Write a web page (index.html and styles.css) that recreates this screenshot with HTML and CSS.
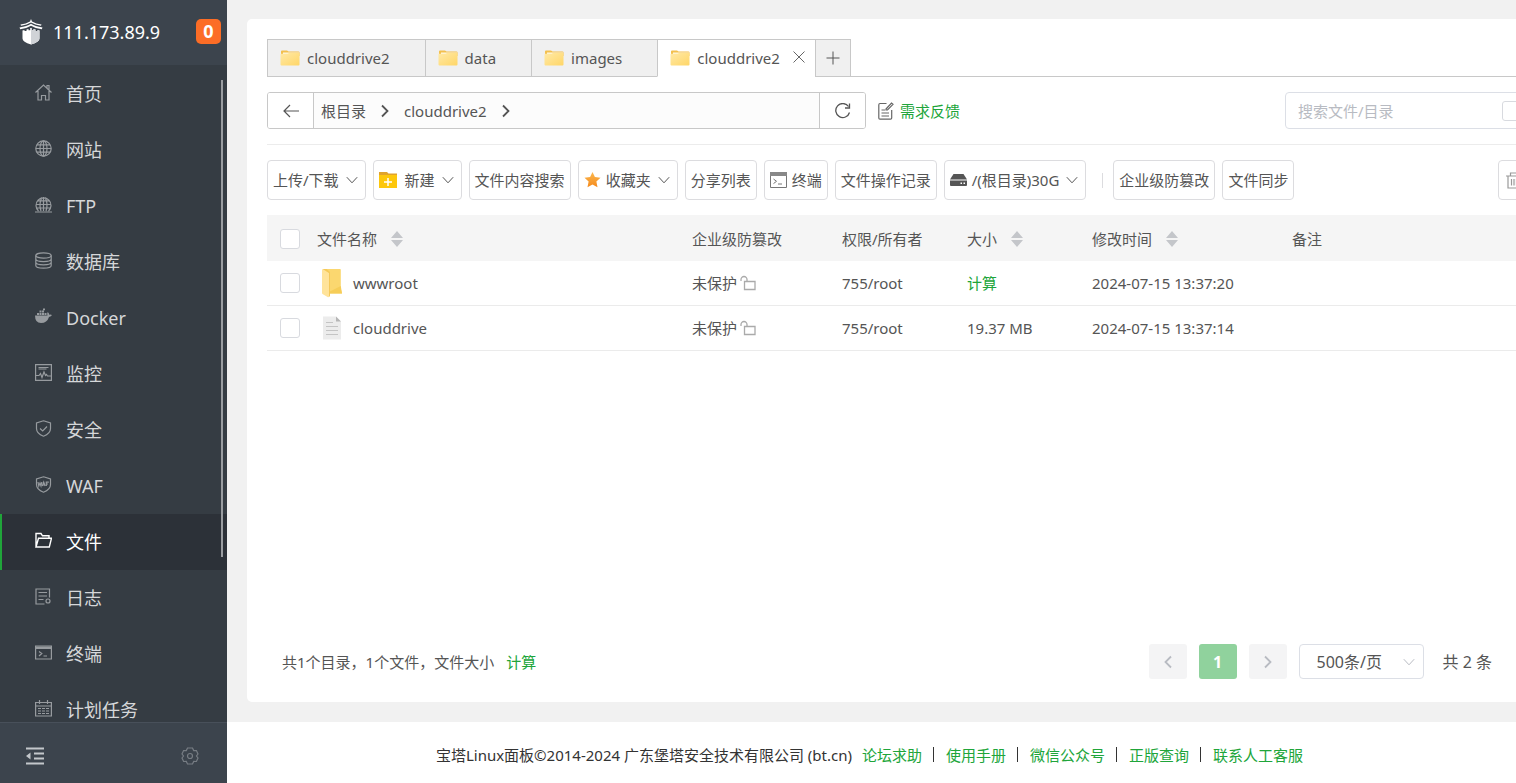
FILE: index.html
```html
<!DOCTYPE html>
<html lang="zh-CN">
<head>
<meta charset="utf-8">
<title>宝塔Linux面板 - 文件</title>
<link rel="stylesheet" href="styles.css">
</head>
<body>
<svg class="sprite" aria-hidden="true">
  <defs>
    <linearGradient id="gold" x1="0" y1="0" x2="1" y2="1"><stop offset="0" stop-color="#ffe9a6"/><stop offset="1" stop-color="#ffd667"/></linearGradient>
    <linearGradient id="starfill" x1="0" y1="0" x2="0" y2="1"><stop offset="0" stop-color="#fbb950"/><stop offset="1" stop-color="#f58a1c"/></linearGradient>
  </defs>
  <symbol id="folder" viewBox="0 0 20 16"><path d="M1 1.5Q1 .5 2 .5h5l1.500 1H18.500q1 0 1 1V6H1z" fill="#f3c04e"/><path d="M3 2.500h16V6H3z" fill="#fff6dc"/><path d="M.5 4.500Q.5 3.800 1.300 3.800H7.500L9 3h9.700q.8 0 .8.8v10.700q0 1-1 1h-17q-1 0-1-1z" fill="url(#gold)"/></symbol>
  <symbol id="chev" viewBox="0 0 12 12"><path d="M.8 3.200 6 8.800l5.200-5.600" fill="none" stroke="currentColor"/></symbol>
  <symbol id="chev-right" viewBox="0 0 10 14"><path d="M2 1.500 7.500 7 2 12.500" fill="none" stroke="currentColor" stroke-width="1.800"/></symbol>
  <symbol id="sorter" viewBox="0 0 12 16"><path d="M6 0l6 7H0zM0 9h12l-6 7z" fill="#c4c6ca"/></symbol>
  <symbol id="unlock" viewBox="0 0 16 16"><path d="M4.500 6.500h10.500v8H4.500zM7 6.500V4.500A3 3 0 0 0 1 4.500V6" fill="none" stroke="#aaa" stroke-width="1.300"/></symbol>
</svg>
<div class="app">
  <aside class="side">
    <header class="side-head">
      <svg class="logo" viewBox="0 0 24 26" fill="#fff"><path d="M12 0l1 2.500q4 2.300 9.500 3l-.5 1.200Q16 6 12 3.600 8 6 2 6.700l-.5-1.200Q7 4.800 11 2.500z"/><path d="M12 4.800q4 2.600 11.500 3.800l-.7 1.600Q16 9.400 12 6.800 8 9.400 1.200 10.200L.5 8.600Q8 7.400 12 4.800z"/><path d="M3.500 11.500l2-.5v1h2v-1.500l2-.5v1.200h1.700V9h1.600v2.200h1.700V10l2 .5V12h2v-1l2 .5v8q0 3.500-8.500 6-8.500-2.500-8.500-6z"/><path d="M12 9h.800v2.200h1.700V10l2 .5V12h2v-1l2 .5v8q0 3.500-8.500 6z" fill="#d0d3d7"/></svg>
      <span class="host">111.173.89.9</span>
      <span class="badge">0</span>
    </header>
    <nav class="nav">
      <a class="item" href="#"><svg viewBox="0 0 17 17"><path d="M.5 8.500 8.500 1l8 7.500M3 7v9h3.500v-4.500h4V16H14V7M12 4V1.500h2V6"/></svg>首页</a>
      <a class="item" href="#"><svg viewBox="0 0 17 17"><circle cx="8.500" cy="8.500" r="7.700"/><ellipse cx="8.500" cy="8.500" rx="3.500" ry="7.700"/><path d="M8.500 1v15M1 8.500h15M2 4.800h13M2 12.200h13"/></svg>网站</a>
      <a class="item" href="#"><svg viewBox="0 0 17 17"><path d="M3.500 15a7.500 7.500 0 1 1 10 0M8.500 1v14M1 8.500h15M2.500 4.800h12M2 12h13M6 15Q3.500 8 7 1.200M11 15Q13.500 8 10 1.200M0 16h17"/></svg>FTP</a>
      <a class="item" href="#"><svg viewBox="0 0 17 17"><ellipse cx="8.500" cy="3.500" rx="7.700" ry="2.700"/><path d="M.8 3.500v10c0 3.600 15.400 3.600 15.400 0v-10M.8 7c0 3.400 15.400 3.400 15.400 0M.8 10.300c0 3.400 15.400 3.400 15.400 0"/></svg>数据库</a>
      <a class="item" href="#"><svg class="solid" viewBox="0 0 17 17"><path d="M0 7.500h12.500q-.8-1.800.2-3.500 1.500 1 1.500 2.700 1.500-.4 2.800.3-.8 1.800-3 1.900Q12 15 6 15 0 15 0 7.500zM2 5h2v2H2zM4.500 5h2v2h-2zM7 5h2v2H7zM9.500 5h2v2h-2zM4.500 2.600h2v2h-2zM7 2.600h2v2H7zM8 .4h2v1.800H8z"/></svg>Docker</a>
      <a class="item" href="#"><svg viewBox="0 0 17 17"><path d="M.6.6h15.800v15.800H.6zM3.500 3.500h10M3.500 5h8M1 11.500h3l1.500-2 1.500 4 2-5.500 1.500 3.500 1-1 1 1.500H16"/></svg>监控</a>
      <a class="item" href="#"><svg viewBox="0 0 17 17"><path d="M8.500.8 15.500 3v5.500q0 5-7 7.700-7-2.700-7-7.700V3zM5 8.500l2.700 2.500L12 6.500"/></svg>安全</a>
      <a class="item" href="#"><svg viewBox="0 0 17 17"><path d="M8.500.8 15.500 3v5.500q0 5-7 7.700-7-2.700-7-7.700V3zM3 6l.8 4L5 7l1 3 .8-4M7.300 10l1.400-4 1.400 4M7.800 9h2M11.300 10V6.200h2.500M11.300 8H13"/></svg>WAF</a>
      <a class="item active" href="#"><svg viewBox="0 0 17 17"><path d="M1 15V1.500h5l1.500 2.300h6.500v2.400M1 15l2.500-8.800h13L14.300 15z"/></svg>文件</a>
      <a class="item" href="#"><svg viewBox="0 0 17 17"><path d="M9.500 16H1V1h13.500v8.500M3.500 4.500h8.500M3.500 8h8.500M3.500 11.500h5"/><circle cx="13" cy="13" r="2"/></svg>日志</a>
      <a class="item" href="#"><svg viewBox="0 0 17 17"><path d="M.6 2h15.800v13H.6zM.6 3.300h15.800M.6 4.500h15.800M4 7.500l2.800 2L4 12M8.500 12H12"/></svg>终端</a>
      <a class="item" href="#"><svg viewBox="0 0 17 17"><path d="M.6 2.500h15.800v13.500H.6zM.6 6h15.800M4.500 0v4M12.500 0v4M3 8.500h3M7 8.500h3M11 8.500h3M3 11h3M7 11h3M11 11h3M3 13.500h3M7 13.500h3M11 13.500h3"/></svg>计划任务</a>
      <i class="thumb"></i>
    </nav>
    <footer class="side-foot">
      <button class="plain" aria-label="收起菜单"><svg width="18" height="18" viewBox="0 0 18 18"><path d="M0 1.500h18M8 6.500h10M8 11.500h10M0 16.500h18" stroke="#c3c7cb" stroke-width="2"/><path d="M0 9l4.500-3.500v7z" fill="#c3c7cb"/></svg></button>
      <button class="plain" aria-label="设置"><svg width="18" height="18" viewBox="0 0 18 18" fill="none" stroke="#777d84" stroke-width="1.200"><path d="M6.500 1h5l1.200 2.600 2.700-.1L17 7l-1.500 2L17 11l-1.600 3.500-2.700-.1L11.500 17h-5l-1.200-2.600-2.700.1L1 11l1.500-2L1 7l1.600-3.500 2.700.1z"/><circle cx="9" cy="9" r="2.500"/></svg></button>
    </footer>
  </aside>

  <div class="page">
    <main class="panel">
      <div class="wide">
        <div class="tabs">
          <button class="tab"><svg><use href="#folder"/></svg>clouddrive2</button>
          <button class="tab"><svg><use href="#folder"/></svg>data</button>
          <button class="tab"><svg><use href="#folder"/></svg>images</button>
          <button class="tab current"><svg><use href="#folder"/></svg>clouddrive2<svg class="close" viewBox="0 0 14 14"><path d="M1.500 1.500l11 11M12.500 1.500l-11 11" stroke="#666"/></svg></button>
          <button class="tab add" aria-label="新建标签"><svg viewBox="0 0 14 14"><path d="M7 .5v13M.5 7h13" stroke="#555"/></svg></button>
        </div>

        <div class="location">
          <div class="pathbar">
            <button class="edge" aria-label="返回"><svg width="16" height="14" viewBox="0 0 16 14" fill="none" stroke="#555" stroke-width="1.200"><path d="M7 1 1 7l6 6M1 7h15"/></svg></button>
            <div class="crumbs">
              <a href="#">根目录</a><svg><use href="#chev-right"/></svg>
              <a href="#">clouddrive2</a><svg><use href="#chev-right"/></svg>
            </div>
            <button class="edge refresh" aria-label="刷新"><svg width="16" height="16" viewBox="0 0 16 16" fill="none" stroke="#555" stroke-width="1.300"><path d="M14.500 9.500A7 7 0 1 1 13.500 3.500M14.500.5v4.500H10"/></svg></button>
          </div>
          <a class="feedback" href="#"><svg width="16" height="18" viewBox="0 0 16 18" fill="none" stroke="#666" stroke-width="1.200"><path d="M8.500 1.500H2Q.8 1.500.8 3v13q0 1.200 1.200 1.200h10.500q1.200 0 1.200-1.200V8M3.500 8H7M3.500 11h7.500M3.500 14h7.500M8 7l5.500-6L15 2.300 9.500 8 8 8z"/></svg>需求反馈</a>
          <div class="search">
            <input type="text" placeholder="搜索文件/目录" aria-label="搜索文件/目录">
            <input type="checkbox" class="box" aria-label="包含子目录">
          </div>
        </div>

        <div class="tools">
          <button class="tool">上传/下载<svg class="down"><use href="#chev"/></svg></button>
          <button class="tool"><svg class="pic new" viewBox="0 0 18 16"><path d="M0 0h8l1.500 1.500H18V4H0z" fill="#e0a32c"/><path d="M0 3h18v13H0z" fill="#fdc70c"/><path d="M9 6v8M5 10h8" stroke="#fff" stroke-width="1.500"/></svg>新建<svg class="down"><use href="#chev"/></svg></button>
          <button class="tool">文件内容搜索</button>
          <button class="tool"><svg class="pic star" viewBox="0 0 16 16"><path d="M8 0l2.400 5 5.600.7-4.100 3.800 1.100 5.700L8 12.500l-5 2.700 1.100-5.700L0 5.700 5.600 5z" fill="url(#starfill)"/></svg>收藏夹<svg class="down"><use href="#chev"/></svg></button>
          <button class="tool">分享列表</button>
          <button class="tool"><svg class="pic" viewBox="0 0 17 16"><path d="M.5.500h16v15H.5z" fill="none" stroke="#777"/><path d="M0 0h17v4H0z" fill="#888"/><path d="M3.500 7l3 2.300-3 2.300M8 12h4" fill="none" stroke="#777"/></svg>终端</button>
          <button class="tool">文件操作记录</button>
          <button class="tool"><svg class="pic" viewBox="0 0 17 16"><path d="M3.500 2h10L17 7.500H0z" fill="#555"/><path d="M0 8.500h17V13q0 1-1 1H1q-1 0-1-1z" fill="#555"/><path d="M10.500 11.200h1.500M13.500 11.200H15" stroke="#fff" stroke-width="1.500"/></svg>/(根目录)30G<svg class="down"><use href="#chev"/></svg></button>
          <i class="rule"></i>
          <button class="tool">企业级防篡改</button>
          <button class="tool">文件同步</button>
          <button class="tool trash" aria-label="回收站"><svg width="16" height="17" viewBox="0 0 16 17" fill="none" stroke="#999" stroke-width="1.200"><path d="M0 4h16M4.500 4V1h7v3M2 4v12h12V4M5.500 7v6.500M8 7v6.500M10.500 7v6.500"/></svg></button>
        </div>

        <table class="files">
          <colgroup><col class="c-check"><col><col class="c-guard"><col class="c-std"><col class="c-std"><col class="c-time"><col class="c-note"></colgroup>
          <thead>
            <tr><th><input type="checkbox" class="box" aria-label="全选"></th><th>文件名称<svg class="sort"><use href="#sorter"/></svg></th><th>企业级防篡改</th><th>权限/所有者</th><th>大小<svg class="sort"><use href="#sorter"/></svg></th><th>修改时间<svg class="sort"><use href="#sorter"/></svg></th><th>备注</th></tr>
          </thead>
          <tbody>
            <tr>
              <td><input type="checkbox" class="box" aria-label="选择 wwwroot"></td>
              <td><div class="name"><svg viewBox="0 0 24 30"><path d="M3 1h17q.8 0 .8.800V21l1.200 4.500H8z" fill="#fbd76f"/><path d="M20.800 18l1.200 7.500H9V24z" fill="#f6cd58"/><path d="M2 1.500Q2 1 3 1.200L9 5v23.500q0 1-1 .7L2.500 26q-.5-.3-.5-1z" fill="#ffe39a"/><path d="M3 1h3.500L10 4v24l-1 1V5z" fill="#f5c95a"/></svg>wwwroot</div></td>
              <td><span class="guard">未保护<svg><use href="#unlock"/></svg></span></td><td>755/root</td><td><a href="#">计算</a></td><td>2024-07-15 13:37:20</td><td></td>
            </tr>
            <tr>
              <td><input type="checkbox" class="box" aria-label="选择 clouddrive"></td>
              <td><div class="name"><svg viewBox="0 0 24 30"><path d="M3 3.500h13l5 5v18H3z" fill="#ececec"/><path d="M16 3.500l5 5h-5z" fill="#b5b5b5"/><path d="M6 9.500h7M6 13.500h12M6 17.500h12M6 21.500h12" stroke="#c4c4c4" stroke-width="1.200"/></svg>clouddrive</div></td>
              <td><span class="guard">未保护<svg><use href="#unlock"/></svg></span></td><td>755/root</td><td>19.37 MB</td><td>2024-07-15 13:37:14</td><td></td>
            </tr>
          </tbody>
        </table>
      </div>

      <div class="summary">
        <p>共1个目录，1个文件，文件大小<a href="#">计算</a></p>
        <div class="pager">
          <button class="pg" aria-label="上一页"><svg class="flip"><use href="#chev-right"/></svg></button>
          <button class="pg on">1</button>
          <button class="pg" aria-label="下一页"><svg><use href="#chev-right"/></svg></button>
          <div class="size"><select aria-label="每页条数"><option>500条/页</option></select><svg><use href="#chev"/></svg></div>
          <span>共 2 条</span>
        </div>
      </div>
    </main>
    <footer class="legal">
      <span class="copy">宝塔Linux面板©2014-2024 广东堡塔安全技术有限公司 (bt.cn)</span>
      <a href="#">论坛求助</a><i></i><a href="#">使用手册</a><i></i><a href="#">微信公众号</a><i></i><a href="#">正版查询</a><i></i><a href="#">联系人工客服</a>
    </footer>
  </div>
</div>
</body>
</html>
```
FILE: styles.css
```css
* { box-sizing: border-box; }

body {
  margin: 0;
  font: 15px/20px "Noto Sans", "Noto Sans CJK SC", sans-serif;
  color: #555;
  background: #f1f1f1;
}

a { color: #20a53a; text-decoration: none; }
button, input, select { font: inherit; color: inherit; }
button { cursor: pointer; }
svg { flex: none; }
.sprite { position: absolute; width: 0; height: 0; }

.app { display: flex; height: 100vh; overflow: hidden; }

/* Sidebar */
.side { flex: none; display: flex; flex-direction: column; width: 227px; background: #353c43; }

.side-head {
  flex: none;
  display: flex;
  align-items: center;
  height: 65px;
  padding: 0 6px 2px 19px;
  background: #3c444d;
  color: #fff;
  font-size: 18px;
}
.logo { width: 24px; height: 26px; }
.host { flex: 1; padding-left: 10px; }
.badge {
  width: 25px;
  border-radius: 5px;
  background: #fc6d26;
  font-weight: 700;
  line-height: 25px;
  text-align: center;
}

.nav { flex: 1; position: relative; min-height: 0; overflow: hidden; padding-top: 1px; }
.item {
  display: flex;
  align-items: center;
  gap: 14px;
  height: 56px;
  padding-left: 33px;
  border-left: 2px solid transparent;
  color: #d5d7d9;
  font-size: 18px;
}
.item svg { width: 17px; height: 17px; margin-bottom: 4px; fill: none; stroke: #979b9f; stroke-width: 1.2; }
.item svg.solid { fill: #979b9f; stroke: none; }
.item.active { border-color: #20a53a; background: #2c3138; color: #fff; }
.item.active svg { stroke: #fff; stroke-width: 1.4; }
.thumb { position: absolute; top: 15px; right: 4px; width: 2px; height: 477px; background: #9a9da1; }

.side-foot {
  flex: none;
  display: flex;
  justify-content: space-between;
  align-items: center;
  height: 61px;
  padding: 6px 28px 0 26px;
  border-top: 1px solid #48505a;
  background: #3c444d;
}
.plain { display: flex; padding: 0; border: 0; background: none; }

/* Main column */
.page { flex: 1; min-width: 0; display: flex; flex-direction: column; }
.panel {
  flex: 1;
  display: flex;
  flex-direction: column;
  min-height: 0;
  margin: 19px 0 20px 20px;
  padding: 20px 0 23px 20px;
  border-radius: 5px 0 0 5px;
  background: #fff;
  overflow: hidden;
}
/* Runs past the right edge and is clipped by the panel */
.wide { flex: 1; width: calc(100% + 31px); }

.tabs { display: flex; height: 38px; border-bottom: 1px solid #c8c8c8; }
.tab {
  display: flex;
  align-items: center;
  gap: 7px;
  height: 38px;
  padding: 0 35px 0 12px;
  border: 1px solid #c8c8c8;
  border-right-width: 0;
  background: #f0f0f0;
}
.tab svg { width: 20px; height: 16px; }
.tab.current { padding-right: 9px; border-bottom-color: #fff; background: #fff; }
.tab svg.close { width: 14px; height: 14px; margin: 0 0 3px 5px; }
.tab.add { padding: 0 10px; border-right-width: 1px; }
.tab.add svg { width: 14px; height: 14px; }

.location {
  display: flex;
  align-items: center;
  padding: 15px 0;
  border-bottom: 1px solid #ececec;
}
.pathbar { display: flex; width: 599px; height: 37px; border: 1px solid #c8c8c8; border-radius: 3px; overflow: hidden; }
.edge { display: flex; align-items: center; justify-content: center; width: 46px; border: 0; border-right: 1px solid #c8c8c8; background: #fff; }
.edge.refresh { border-right: 0; border-left: 1px solid #c8c8c8; }
.crumbs { flex: 1; display: flex; align-items: center; padding-left: 7px; background: #fcfcfc; }
.crumbs a { color: #555; }
.crumbs svg { width: 10px; height: 14px; margin: 0 14px; }
.feedback { display: flex; align-items: center; gap: 6px; margin-left: 12px; }
.search {
  display: flex;
  align-items: center;
  width: 262px;
  height: 37px;
  margin-left: auto;
  padding-left: 12px;
  border: 1px solid #dcdfe6;
  border-radius: 4px;
}
.search input[type="text"] { flex: none; width: 204px; padding: 0; border: 0; outline: 0; background: none; }
.search input::placeholder { color: #b8bbc2; }

.box {
  appearance: none;
  display: block;
  flex: none;
  width: 20px;
  height: 20px;
  margin: 0;
  border: 1px solid #d8dadf;
  border-radius: 3px;
  background: #fff;
}

.tools { display: flex; align-items: center; gap: 7px; padding: 15px 0; }
.tool {
  display: flex;
  align-items: center;
  flex: none;
  height: 40px;
  padding: 0 5px;
  border: 1px solid #dcdcdf;
  border-radius: 4px;
  background: #fff;
  white-space: nowrap;
}
.down { width: 12px; height: 12px; margin: 0 2px 0 7px; }
.pic { width: 17px; height: 16px; margin-right: 5px; }
.pic.new { width: 18px; margin-right: 8px; }
.rule { width: 1px; height: 15px; margin: 0 3px 0 9px; background: #dcdcdf; }
.trash { width: 49px; margin-left: auto; padding-left: 7px; }

/* File table */
.files { width: 100%; table-layout: fixed; border-collapse: separate; border-spacing: 0; }
.c-check { width: 46px; }
.c-guard { width: 150px; }
.c-std { width: 125px; }
.c-time { width: 200px; }
.c-note { width: 259px; }
.files th, .files td { height: 45px; padding: 0 4px; border-bottom: 1px solid #ebebeb; font-weight: 400; text-align: left; }
.files th { height: 46px; padding-top: 2px; border-color: #f5f5f5; background: #f5f5f5; }
.files .box { margin-left: 9px; }
.sort { width: 12px; height: 16px; margin-left: 14px; vertical-align: -2px; }
.name { display: flex; align-items: center; gap: 9px; padding-left: 3px; }
.name svg { width: 24px; height: 30px; }
.guard { display: flex; align-items: center; gap: 3px; }
.guard svg { width: 16px; height: 16px; }

.summary { display: flex; justify-content: space-between; align-items: center; padding: 0 24px 0 15px; }
.summary p { margin: 0; }
.summary p a { margin-left: 12px; }
.pager { display: flex; align-items: center; font-size: 16px; }
.pg {
  display: flex;
  align-items: center;
  justify-content: center;
  width: 38px;
  height: 35px;
  margin-right: 12px;
  padding: 0;
  border: 0;
  border-radius: 3px;
  background: #f4f4f5;
  color: #b8bbc2;
}
.pg svg { width: 10px; height: 14px; }
.pg .flip { transform: rotate(180deg); }
.pg.on { background: #90d29d; color: #fff; font-weight: 700; }
.size { position: relative; margin-right: 19px; }
.size select { appearance: none; width: 125px; height: 35px; padding: 0 17px; border: 1px solid #dcdfe6; border-radius: 4px; background: #fff; }
.size svg { position: absolute; top: 12px; right: 9px; width: 12px; height: 12px; color: #b8bbc2; pointer-events: none; }

.legal {
  flex: none;
  display: flex;
  align-items: center;
  justify-content: center;
  height: 61px;
  padding: 4px 4px 0 0;
  background: #fff;
  color: #333;
}
.copy { margin-right: 10px; }
.legal i { width: 1px; height: 15px; margin: 0 12px 0 11px; background: #333; }
```
